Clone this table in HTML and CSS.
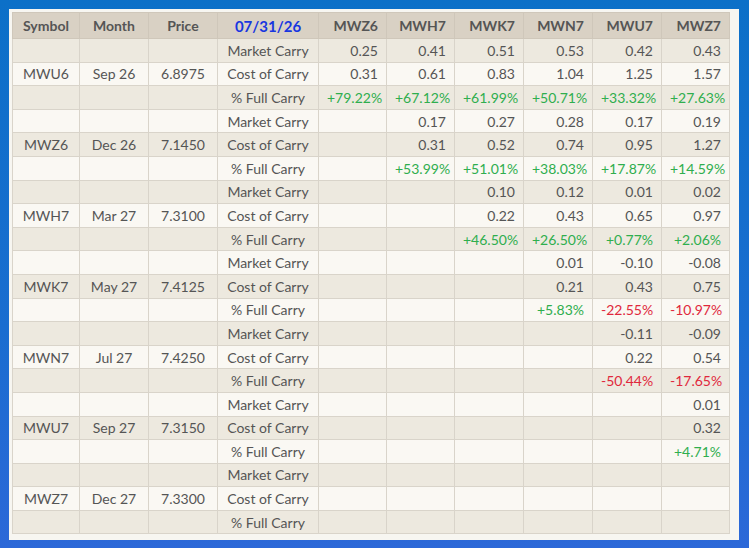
FILE: index.html
```html
<!DOCTYPE html>
<html>
<head>
<meta charset="utf-8">
<link rel="stylesheet" href="styles.css">
</head>
<body>
<div class="panel">
<table class="carry">
<colgroup>
<col class="c-sym"><col class="c-mon"><col class="c-pr"><col class="c-lab">
<col class="c-n1"><col class="c-n2"><col class="c-n3"><col class="c-n4"><col class="c-n5"><col class="c-n6">
</colgroup>
<thead>
<tr><th>Symbol</th><th>Month</th><th>Price</th><th class="date">07/31/26</th><th class="num">MWZ6</th><th class="num">MWH7</th><th class="num">MWK7</th><th class="num">MWN7</th><th class="num">MWU7</th><th class="num">MWZ7</th></tr>
</thead>
<tbody>
<tr><td></td><td></td><td></td><td>Market Carry</td><td class="num">0.25</td><td class="num">0.41</td><td class="num">0.51</td><td class="num">0.53</td><td class="num">0.42</td><td class="num">0.43</td></tr>
<tr><td>MWU6</td><td>Sep 26</td><td>6.8975</td><td>Cost of Carry</td><td class="num">0.31</td><td class="num">0.61</td><td class="num">0.83</td><td class="num">1.04</td><td class="num">1.25</td><td class="num">1.57</td></tr>
<tr><td></td><td></td><td></td><td>% Full Carry</td><td class="num pos">+79.22%</td><td class="num pos">+67.12%</td><td class="num pos">+61.99%</td><td class="num pos">+50.71%</td><td class="num pos">+33.32%</td><td class="num pos">+27.63%</td></tr>

<tr><td></td><td></td><td></td><td>Market Carry</td><td class="num"></td><td class="num">0.17</td><td class="num">0.27</td><td class="num">0.28</td><td class="num">0.17</td><td class="num">0.19</td></tr>
<tr><td>MWZ6</td><td>Dec 26</td><td>7.1450</td><td>Cost of Carry</td><td class="num"></td><td class="num">0.31</td><td class="num">0.52</td><td class="num">0.74</td><td class="num">0.95</td><td class="num">1.27</td></tr>
<tr><td></td><td></td><td></td><td>% Full Carry</td><td class="num"></td><td class="num pos">+53.99%</td><td class="num pos">+51.01%</td><td class="num pos">+38.03%</td><td class="num pos">+17.87%</td><td class="num pos">+14.59%</td></tr>

<tr><td></td><td></td><td></td><td>Market Carry</td><td class="num"></td><td class="num"></td><td class="num">0.10</td><td class="num">0.12</td><td class="num">0.01</td><td class="num">0.02</td></tr>
<tr><td>MWH7</td><td>Mar 27</td><td>7.3100</td><td>Cost of Carry</td><td class="num"></td><td class="num"></td><td class="num">0.22</td><td class="num">0.43</td><td class="num">0.65</td><td class="num">0.97</td></tr>
<tr><td></td><td></td><td></td><td>% Full Carry</td><td class="num"></td><td class="num"></td><td class="num pos">+46.50%</td><td class="num pos">+26.50%</td><td class="num pos">+0.77%</td><td class="num pos">+2.06%</td></tr>

<tr><td></td><td></td><td></td><td>Market Carry</td><td class="num"></td><td class="num"></td><td class="num"></td><td class="num">0.01</td><td class="num">-0.10</td><td class="num">-0.08</td></tr>
<tr><td>MWK7</td><td>May 27</td><td>7.4125</td><td>Cost of Carry</td><td class="num"></td><td class="num"></td><td class="num"></td><td class="num">0.21</td><td class="num">0.43</td><td class="num">0.75</td></tr>
<tr><td></td><td></td><td></td><td>% Full Carry</td><td class="num"></td><td class="num"></td><td class="num"></td><td class="num pos">+5.83%</td><td class="num neg">-22.55%</td><td class="num neg">-10.97%</td></tr>

<tr><td></td><td></td><td></td><td>Market Carry</td><td class="num"></td><td class="num"></td><td class="num"></td><td class="num"></td><td class="num">-0.11</td><td class="num">-0.09</td></tr>
<tr><td>MWN7</td><td>Jul 27</td><td>7.4250</td><td>Cost of Carry</td><td class="num"></td><td class="num"></td><td class="num"></td><td class="num"></td><td class="num">0.22</td><td class="num">0.54</td></tr>
<tr><td></td><td></td><td></td><td>% Full Carry</td><td class="num"></td><td class="num"></td><td class="num"></td><td class="num"></td><td class="num neg">-50.44%</td><td class="num neg">-17.65%</td></tr>

<tr><td></td><td></td><td></td><td>Market Carry</td><td class="num"></td><td class="num"></td><td class="num"></td><td class="num"></td><td class="num"></td><td class="num">0.01</td></tr>
<tr><td>MWU7</td><td>Sep 27</td><td>7.3150</td><td>Cost of Carry</td><td class="num"></td><td class="num"></td><td class="num"></td><td class="num"></td><td class="num"></td><td class="num">0.32</td></tr>
<tr><td></td><td></td><td></td><td>% Full Carry</td><td class="num"></td><td class="num"></td><td class="num"></td><td class="num"></td><td class="num"></td><td class="num pos">+4.71%</td></tr>

<tr><td></td><td></td><td></td><td>Market Carry</td><td class="num"></td><td class="num"></td><td class="num"></td><td class="num"></td><td class="num"></td><td class="num"></td></tr>
<tr><td>MWZ7</td><td>Dec 27</td><td>7.3300</td><td>Cost of Carry</td><td class="num"></td><td class="num"></td><td class="num"></td><td class="num"></td><td class="num"></td><td class="num"></td></tr>
<tr><td></td><td></td><td></td><td>% Full Carry</td><td class="num"></td><td class="num"></td><td class="num"></td><td class="num"></td><td class="num"></td><td class="num"></td></tr>
</tbody>
</table>
</div>
</body>
</html>
```

FILE: styles.css
```css
html, body {
  margin: 0;
  padding: 0;
}
body {
  width: 749px;
  height: 548px;
  background: linear-gradient(180deg, #0c70c8 0%, #1a6dd0 60%, #2c68d8 100%);
  font-family: Lato, "Open Sans", sans-serif;
  overflow: hidden;
}
.panel {
  box-sizing: border-box;
  margin: 9px 0 0 9px;
  width: 730px;
  height: 531px;
  background: #f7f6f1;
  padding: 3px 0 0 3px;
}
.carry {
  border-collapse: collapse;
  table-layout: fixed;
  width: 717px;
  font-size: 14px;
  color: #555;
}
.c-sym { width: 67px; }
.c-mon { width: 69px; }
.c-pr { width: 69px; }
.c-lab { width: 101px; }
.c-n1 { width: 68px; }
.c-n2 { width: 68px; }
.c-n3 { width: 69px; }
.c-n4 { width: 69px; }
.c-n5 { width: 69px; }
.c-n6 { width: 68px; }
.carry th, .carry td {
  border: 1px solid #d9d4ca;
  padding: 0 8px;
  text-align: center;
  white-space: nowrap;
  overflow: hidden;
}
.carry thead tr {
  height: 26px;
  background: #d9d1c4;
}
.carry th {
  font-weight: 700;
  font-size: 14px;
  color: #555;
  border-color: #cfc7ba;
}
.carry th.date {
  color: #1836e0;
  font-size: 15px;
}
.carry tbody tr {
  height: 23.6px;
}
.carry tbody tr:nth-child(odd) {
  background: #ede9df;
}
.carry tbody tr:nth-child(even) {
  background: #faf8f3;
}
.carry .num {
  text-align: right;
  padding-right: 8px;
}
.carry .pos { color: #2fae4e; }
.carry .neg { color: #e0283c; }
```
